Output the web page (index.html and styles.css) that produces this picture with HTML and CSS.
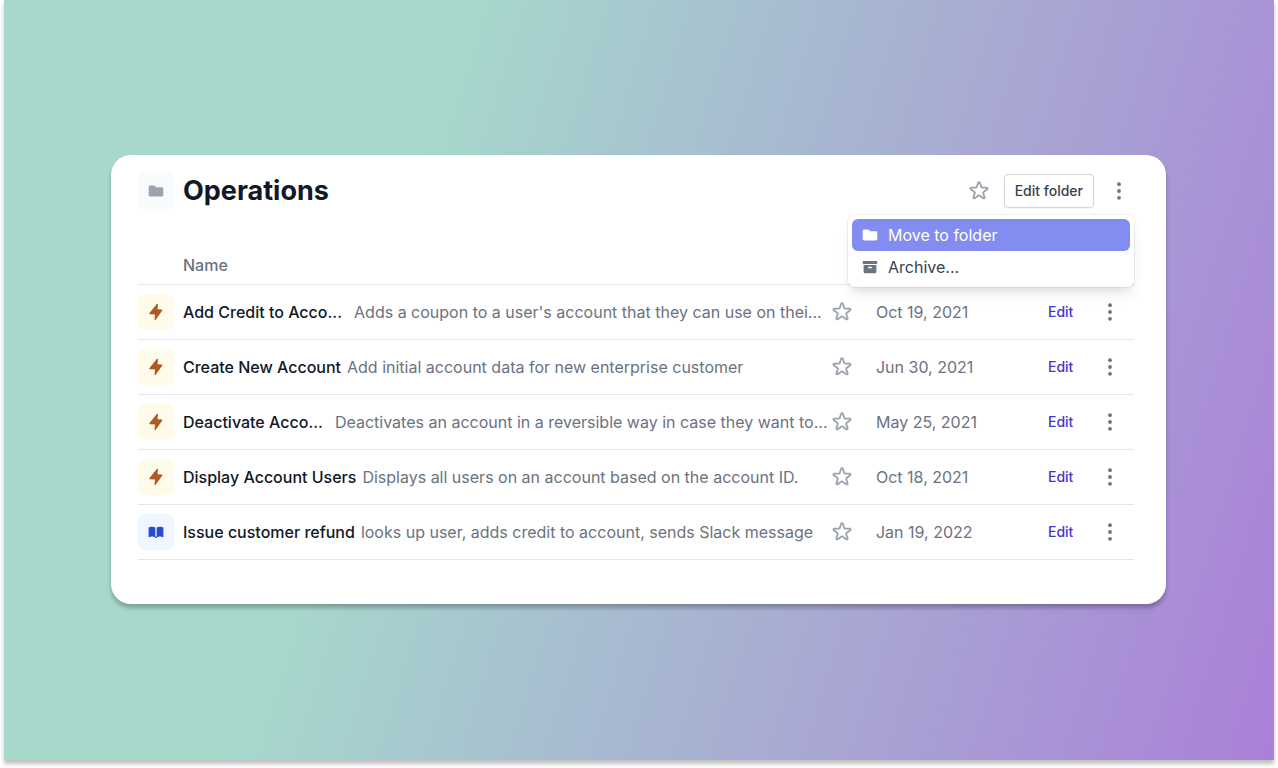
FILE: index.html
```html
<!DOCTYPE html>
<html lang="en">
<head>
    <meta charset="UTF-8">
    <meta name="viewport" content="width=device-width, initial-scale=1.0">
    <title>Operations</title>
    <link rel="stylesheet" href="styles.css">
</head>
<body>
    <!-- Shared icons -->
    <svg class="icon-defs" aria-hidden="true">
        <symbol id="icon-star" viewBox="0 0 24 24">
            <path fill="none" stroke="currentColor" stroke-width="2" stroke-linecap="round" stroke-linejoin="round" d="M11.049 2.927c.3-.921 1.603-.921 1.902 0l1.519 4.674a1 1 0 00.95.69h4.915c.969 0 1.371 1.24.588 1.81l-3.976 2.888a1 1 0 00-.363 1.118l1.518 4.674c.3.922-.755 1.688-1.538 1.118l-3.976-2.888a1 1 0 00-1.176 0l-3.976 2.888c-.783.57-1.838-.197-1.538-1.118l1.518-4.674a1 1 0 00-.363-1.118l-3.976-2.888c-.784-.57-.38-1.81.588-1.81h4.914a1 1 0 00.951-.69l1.519-4.674z"/>
        </symbol>
        <symbol id="icon-dots" viewBox="0 0 18 18">
            <circle cx="9" cy="2.2" r="1.9"/>
            <circle cx="9" cy="9" r="1.9"/>
            <circle cx="9" cy="15.8" r="1.9"/>
        </symbol>
        <symbol id="icon-folder" viewBox="0 0 18 18">
            <path d="M1.7 4.900a1.400 1.400 0 011.400-1.400h3.700c.5 0 .9.2 1.200.5l1.200 1.200h5.700a1.400 1.400 0 011.400 1.400v6.500a1.400 1.400 0 01-1.400 1.400H3.100a1.400 1.400 0 01-1.400-1.400z"/>
        </symbol>
        <symbol id="icon-archive" viewBox="0 0 18 18">
            <path d="M2.500 2.900h13c.5 0 .8.3.8.8v1.400c0 .5-.3.8-.8.8h-13c-.5 0-.8-.3-.8-.8V3.700c0-.5.3-.8.8-.8z"/>
            <path fill-rule="evenodd" d="M2.600 6.900h12.800v6.800a1.500 1.500 0 01-1.500 1.500H4.100a1.500 1.500 0 01-1.500-1.500zM7.200 8.700v1.600h3.600V8.700z"/>
        </symbol>
        <symbol id="icon-bolt" viewBox="0 0 18 18">
            <path d="M9.800 1c.5-.6 1.300-.3 1.200.4L10.500 6.200l4.300.4c.6.1.8.6.5 1L8.500 17c-.4.5-1.100.2-1-.4l.5-5.100-5-.3c-.7 0-.9-.6-.5-1.100z"/>
        </symbol>
        <symbol id="icon-book" viewBox="0 0 18 18">
            <path d="M1.600 4.500C3 3.500 6.500 3.400 8.300 4.500v10c-1.500-1.100-4.500-1.100-5.700-.4-.5.3-1 0-1-.5zM9.700 4.500c1.800-1.100 5.300-1 6.700 0v9.100c0 .5-.5.8-1 .5-1.200-.7-4.200-.7-5.700.4z"/>
            <path d="M8 13.600h2v.9c-.6.6-1.400.6-2 0z"/>
        </symbol>
    </svg>

    <main class="stage">
        <section class="card">
            <!-- Folder Header -->
            <header class="folder-header">
                <span class="tile tile-folder"><svg class="icon"><use href="#icon-folder"/></svg></span>
                <h1>Operations</h1>
                <div class="folder-actions">
                    <button type="button" class="icon-button star" aria-label="Star folder"><svg><use href="#icon-star"/></svg></button>
                    <button type="button" class="edit-folder">Edit folder</button>
                    <div class="menu-wrap">
                        <button type="button" class="icon-button dots" aria-label="Folder options" aria-expanded="true"><svg><use href="#icon-dots"/></svg></button>
                        <div class="menu" role="menu">
                            <button type="button" class="menu-item active" role="menuitem"><svg class="icon"><use href="#icon-folder"/></svg>Move to folder</button>
                            <button type="button" class="menu-item" role="menuitem"><svg class="icon"><use href="#icon-archive"/></svg>Archive...</button>
                        </div>
                    </div>
                </div>
            </header>

            <!-- Folder Contents -->
            <table class="items">
                <colgroup>
                    <col>
                    <col class="col-star">
                    <col class="col-date">
                    <col class="col-edit">
                    <col class="col-dots">
                </colgroup>
                <thead>
                    <tr>
                        <th class="name-head" colspan="5">Name</th>
                    </tr>
                </thead>
                <tbody>
                    <tr>
                        <td>
                            <div class="item">
                                <span class="tile tile-action"><svg class="icon"><use href="#icon-bolt"/></svg></span>
                                <span class="item-name clipped">Add Credit to Acco...</span>
                                <span class="item-text">Adds a coupon to a user's account that they can use on thei...</span>
                            </div>
                        </td>
                        <td><button type="button" class="icon-button star" aria-label="Star"><svg><use href="#icon-star"/></svg></button></td>
                        <td>Oct 19, 2021</td>
                        <td><a href="#" class="edit-link">Edit</a></td>
                        <td><button type="button" class="icon-button dots" aria-label="Options"><svg><use href="#icon-dots"/></svg></button></td>
                    </tr>
                    <tr>
                        <td>
                            <div class="item">
                                <span class="tile tile-action"><svg class="icon"><use href="#icon-bolt"/></svg></span>
                                <span class="item-name">Create New Account</span>
                                <span class="item-text">Add initial account data for new enterprise customer</span>
                            </div>
                        </td>
                        <td><button type="button" class="icon-button star" aria-label="Star"><svg><use href="#icon-star"/></svg></button></td>
                        <td>Jun 30, 2021</td>
                        <td><a href="#" class="edit-link">Edit</a></td>
                        <td><button type="button" class="icon-button dots" aria-label="Options"><svg><use href="#icon-dots"/></svg></button></td>
                    </tr>
                    <tr>
                        <td>
                            <div class="item">
                                <span class="tile tile-action"><svg class="icon"><use href="#icon-bolt"/></svg></span>
                                <span class="item-name clipped">Deactivate Acco...</span>
                                <span class="item-text">Deactivates an account in a reversible way in case they want to...</span>
                            </div>
                        </td>
                        <td><button type="button" class="icon-button star" aria-label="Star"><svg><use href="#icon-star"/></svg></button></td>
                        <td>May 25, 2021</td>
                        <td><a href="#" class="edit-link">Edit</a></td>
                        <td><button type="button" class="icon-button dots" aria-label="Options"><svg><use href="#icon-dots"/></svg></button></td>
                    </tr>
                    <tr>
                        <td>
                            <div class="item">
                                <span class="tile tile-action"><svg class="icon"><use href="#icon-bolt"/></svg></span>
                                <span class="item-name">Display Account Users</span>
                                <span class="item-text">Displays all users on an account based on the account ID.</span>
                            </div>
                        </td>
                        <td><button type="button" class="icon-button star" aria-label="Star"><svg><use href="#icon-star"/></svg></button></td>
                        <td>Oct 18, 2021</td>
                        <td><a href="#" class="edit-link">Edit</a></td>
                        <td><button type="button" class="icon-button dots" aria-label="Options"><svg><use href="#icon-dots"/></svg></button></td>
                    </tr>
                    <tr>
                        <td>
                            <div class="item">
                                <span class="tile tile-runbook"><svg class="icon"><use href="#icon-book"/></svg></span>
                                <span class="item-name">Issue customer refund</span>
                                <span class="item-text">looks up user, adds credit to account, sends Slack message</span>
                            </div>
                        </td>
                        <td><button type="button" class="icon-button star" aria-label="Star"><svg><use href="#icon-star"/></svg></button></td>
                        <td>Jan 19, 2022</td>
                        <td><a href="#" class="edit-link">Edit</a></td>
                        <td><button type="button" class="icon-button dots" aria-label="Options"><svg><use href="#icon-dots"/></svg></button></td>
                    </tr>
                </tbody>
            </table>
        </section>
    </main>
</body>
</html>
```
FILE: styles.css
```css
/* Global Styles */
* {
    box-sizing: border-box;
}

body {
    min-height: 100vh;
    margin: 0;
    padding: 0 4px 8px;
    background: #fff;
    color: #6b7280;
    font-family: Inter, "Liberation Sans", sans-serif;
    font-size: 16px;
    line-height: 24px;
}

button {
    margin: 0;
    padding: 0;
    border: none;
    background: none;
    color: inherit;
    font: inherit;
    cursor: pointer;
}

svg {
    display: block;
    fill: currentColor;
}

.icon-defs {
    display: none;
}

.icon {
    width: 18px;
    height: 18px;
}

/* Backdrop */
.stage {
    display: flex;
    align-items: center;
    min-height: calc(100vh - 8px);
    padding: 32px 108px 33px 107px;
    background: linear-gradient(107deg, #a6d9cc 30%, #aa80d8);
    box-shadow: 0 4px 4px rgba(0, 0, 0, 0.25);
}

.card {
    width: 100%;
    padding: 18px 32px 44px 27px;
    background: #fff;
    border-radius: 20px;
    box-shadow: 0 4px 4px rgba(0, 0, 0, 0.25);
}

/* Folder Header */
.folder-header {
    display: flex;
    align-items: center;
    gap: 9px;
}

.folder-header h1 {
    margin: 0;
    color: #111827;
    font-size: 27px;
    font-weight: 700;
    line-height: 36px;
}

.folder-actions {
    display: flex;
    align-items: center;
    gap: 14px;
    margin-left: auto;
}

.edit-folder {
    padding: 6px 10px;
    border: 1px solid #d1d5db;
    border-radius: 4px;
    color: #374151;
    font-size: 14px;
    font-weight: 500;
    line-height: 20px;
    box-shadow: 0 1px 2px rgba(0, 0, 0, 0.05);
}

.icon-button {
    display: block;
}

.star {
    color: #9ca3af;
}

.star svg {
    width: 22px;
    height: 22px;
}

.dots {
    color: #6b7280;
}

.dots svg {
    width: 18px;
    height: 18px;
}

/* Dropdown Menu */
.menu-wrap {
    position: relative;
    padding: 0 6px 0 2px;
}

.menu {
    position: absolute;
    top: 33px;
    right: 0;
    width: 286px;
    padding: 4px;
    background: #fff;
    border-radius: 7px;
    box-shadow: 0 0 0 1px rgba(0, 0, 0, 0.05), 0 9px 14px -3px rgba(0, 0, 0, 0.1), 0 4px 6px -2px rgba(0, 0, 0, 0.05);
}

.menu-item {
    display: flex;
    align-items: center;
    gap: 9px;
    width: 100%;
    padding: 4px 9px;
    border-radius: 6px;
    color: #374151;
}

.menu-item .icon {
    color: #6b7280;
}

.menu-item.active,
.menu-item.active .icon {
    color: #fff;
}

.menu-item.active {
    background: #838df1;
}

/* Items Table */
.items {
    width: 100%;
    margin-top: 36px;
    border-collapse: collapse;
    table-layout: fixed;
}

.col-star {
    width: 45px;
}

.col-date {
    width: 172px;
}

.col-edit {
    width: 53px;
}

.col-dots {
    width: 33px;
}

.items th,
.items td {
    padding: 0;
    border-bottom: 1px solid #e5e7eb;
    text-align: left;
    white-space: nowrap;
}

.items td {
    height: 55px;
}

.items .name-head {
    height: 40px;
    padding-left: 45px;
    font-weight: 500;
}

.item {
    display: flex;
    align-items: center;
    gap: 6px;
}

.tile {
    display: flex;
    flex: none;
    align-items: center;
    justify-content: center;
    width: 36px;
    height: 36px;
    border-radius: 7px;
}

.tile-folder {
    background: #f9fafb;
    color: #9ca3af;
}

.tile-action {
    background: #fffbeb;
    color: #ae5a22;
}

.tile-runbook {
    background: #eff6ff;
    color: #284bd3;
}

.item-name {
    padding-left: 3px;
    color: #111827;
    font-weight: 500;
}

.item-name.clipped {
    padding-right: 6px;
}

.edit-link {
    display: block;
    color: #4338ca;
    font-size: 14px;
    font-weight: 500;
    text-decoration: none;
}
```
